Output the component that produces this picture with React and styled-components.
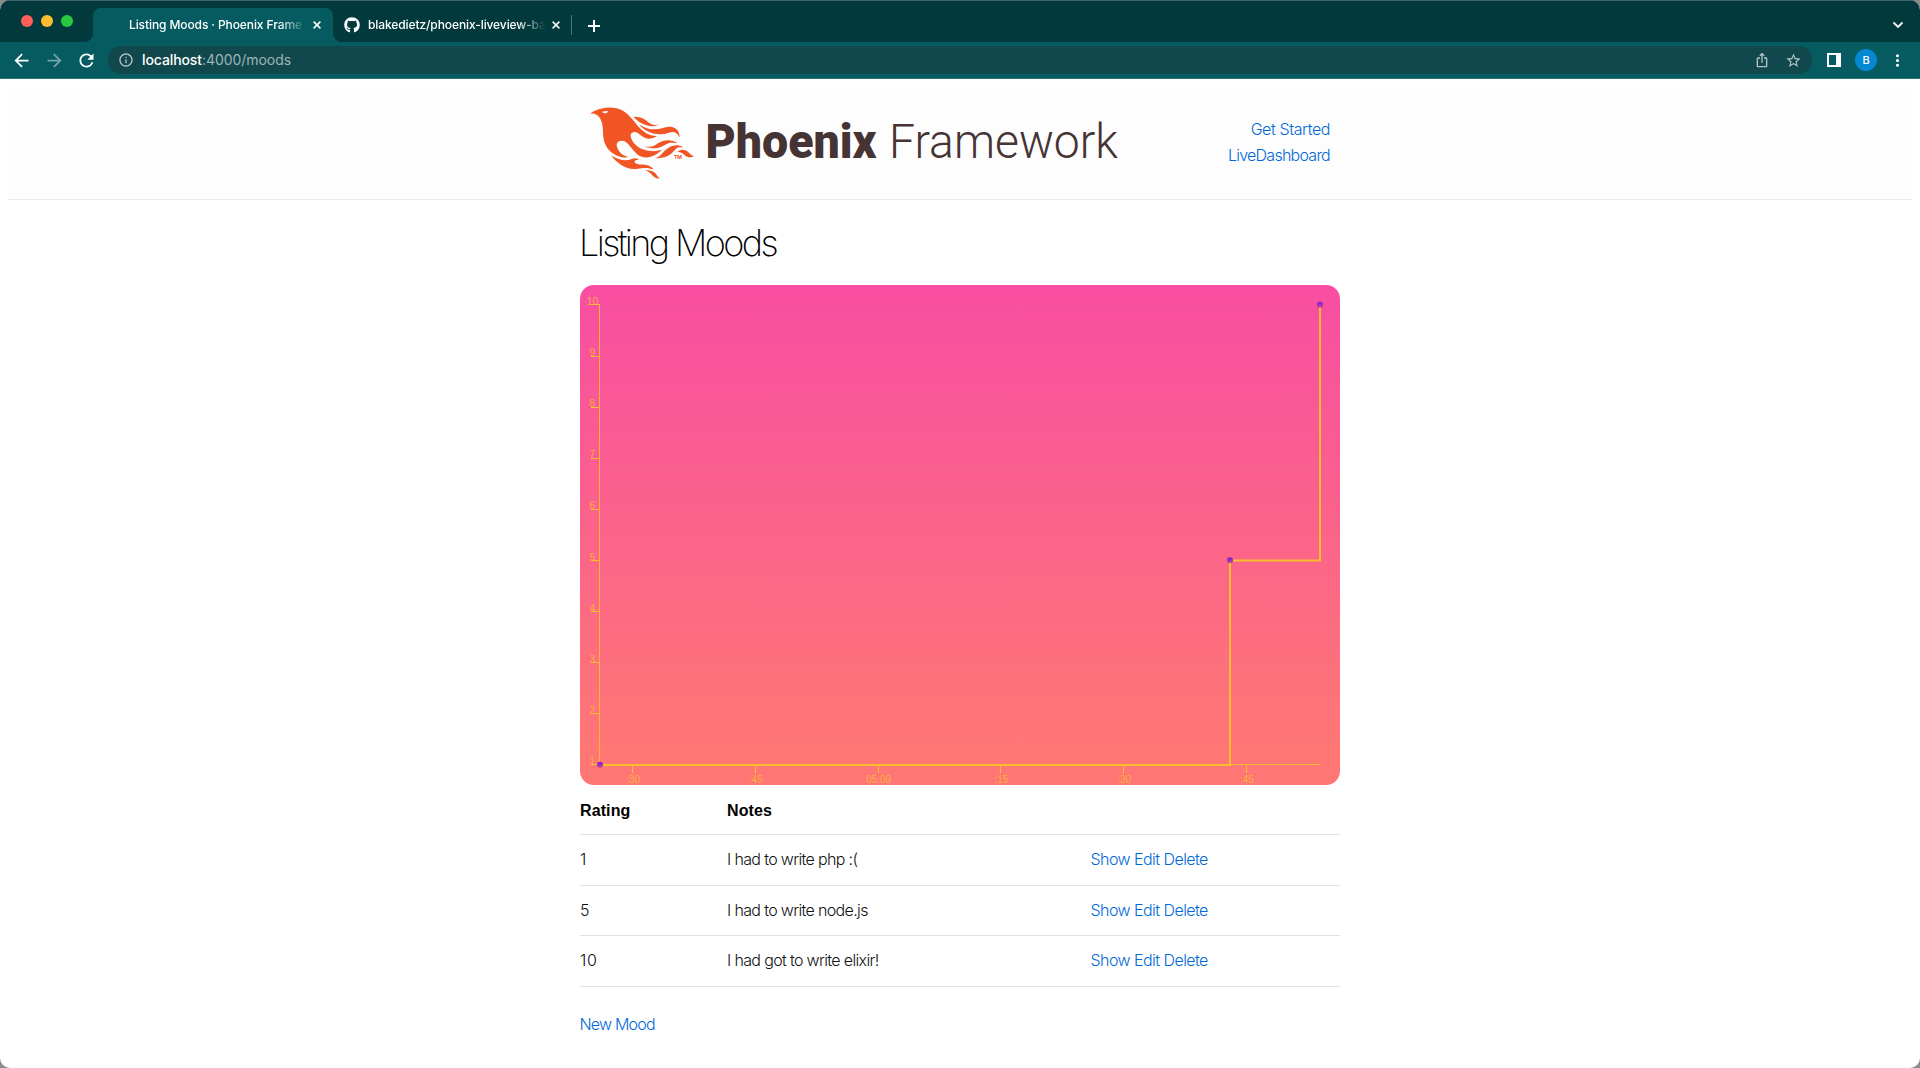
import React from "react";
import styled, { createGlobalStyle } from "styled-components";
import {
  MdArrowBack,
  MdArrowForward,
  MdRefresh,
  MdInfoOutline,
  MdIosShare,
  MdStarBorder,
  MdMoreVert,
} from "react-icons/md";
import { FaGithub } from "react-icons/fa";
import { SiPhoenixframework } from "react-icons/si";

const color = {
  strip: "#02393c",
  toolbar: "#055b60",
  field: "#10484d",
  link: "#0069d9",
  yellow: "#f9bf2c",
  phoenix: "#f15524",
  ink: "#463333",
};

const GlobalStyle = createGlobalStyle`
  *, *::before, *::after { box-sizing: border-box; }
  body {
    margin: 0;
    background: #8b8b8b;
    font-family: Inter, "Liberation Sans", sans-serif;
  }
  svg { display: block; flex: none; }
`;

const Window = styled.div`
  display: flex;
  flex-direction: column;
  height: 1068px;
  overflow: hidden;
  background: #fff;
  border-radius: 10px;
`;

const TabStrip = styled.div`
  display: flex;
  align-items: flex-end;
  height: 42px;
  background: ${color.strip};
  border-top: 1px solid #3c6568;
  color: #fff;
`;

const Lights = styled.div`
  display: flex;
  gap: 8px;
  width: 93px;
  height: 41px;
  padding: 14px 0 0 21px;
`;

const Light = styled.span`
  width: 12px;
  height: 12px;
  border-radius: 50%;
  background: ${(p) => p.$color};
`;

const Tab = styled.div`
  position: relative;
  display: flex;
  align-items: center;
  width: ${(p) => p.$width}px;
  height: 34px;
  padding-left: ${(p) => (p.$active ? 36 : 11)}px;
  border-radius: 8px 8px 0 0;
  background: ${(p) => (p.$active ? color.toolbar : "transparent")};

  &::before,
  &::after {
    content: "";
    display: ${(p) => (p.$active ? "block" : "none")};
    position: absolute;
    bottom: 0;
    width: 8px;
    height: 8px;
  }
  &::before {
    left: -8px;
    background: radial-gradient(circle at 0 0, transparent 7.5px, ${color.toolbar} 8px);
  }
  &::after {
    right: -8px;
    background: radial-gradient(circle at 100% 0, transparent 7.5px, ${color.toolbar} 8px);
  }
`;

const TabTitle = styled.span`
  width: 178px;
  margin-left: ${(p) => (p.$iconed ? 8 : 0)}px;
  white-space: nowrap;
  font-size: 12px;
  font-weight: 500;
  line-height: 16px;
  letter-spacing: -0.1px;
  mask-image: linear-gradient(to right, #000 84%, transparent 100%);
`;

const Stroke = styled.svg`
  margin-left: ${(p) => p.$gap || 0}px;
  fill: none;
  stroke: currentColor;
  stroke-width: ${(p) => p.$weight || 1.6};
`;

const StripDivider = styled.span`
  width: 1px;
  height: 20px;
  margin: 0 16px 7px 2px;
  background: #4f7477;
`;

const NewTab = styled.span`
  margin-bottom: 10px;
`;

const TabSearch = styled.span`
  margin: 0 16px 11px auto;
`;

const Toolbar = styled.div`
  display: flex;
  align-items: center;
  height: 37px;
  padding-left: 11px;
  background: ${color.toolbar};
  border-bottom: 1px solid #2b7478;
  color: #fff;
`;

const NavButtons = styled.div`
  display: flex;
  gap: 11.5px;
  width: 97px;
`;

const NavButton = styled.span`
  opacity: ${(p) => (p.$disabled ? 0.45 : 1)};
`;

const AddressField = styled.div`
  display: flex;
  flex: none;
  align-items: center;
  width: 1704px;
  height: 28px;
  padding: 0 10px;
  border-radius: 14px;
  background: ${color.field};
  color: #b4c4c5;
`;

const Url = styled.span`
  flex: 1;
  margin-left: 8px;
  font-size: 14px;
  line-height: 18px;
  letter-spacing: -0.05px;
  color: #9fb5b7;

  b {
    font-weight: 500;
    letter-spacing: -0.1px;
    color: #fff;
  }
`;

const FieldActions = styled.div`
  display: flex;
  align-items: center;
  gap: 15px;
`;

const SidePanel = styled.span`
  width: 14px;
  height: 14px;
  margin-left: 15px;
  border: 2px solid #fff;
  border-right-width: 5px;
`;

const Avatar = styled.span`
  width: 22px;
  height: 22px;
  margin: 0 11px 0 14px;
  border-radius: 50%;
  background: #0588d1;
  font-size: 11px;
  font-weight: 500;
  line-height: 22px;
  text-align: center;
`;

const Page = styled.div`
  flex: 1;
  padding: 8px;
`;

const Header = styled.header`
  height: 113px;
  background: #fdfdfd;
  border-bottom: 1px solid #eaeaea;
`;

const Container = styled.div`
  width: 760px;
  margin: 0 auto;
`;

const HeaderRow = styled(Container)`
  display: flex;
  justify-content: space-between;
  padding: 0 10px;
`;

const Brand = styled.div`
  display: flex;
  align-items: flex-start;
  height: 112px;
`;

const Bird = styled.div`
  position: relative;
  margin-top: 4px;
  color: ${color.phoenix};
`;

const Trademark = styled.span`
  position: absolute;
  left: 84px;
  top: 63px;
  font: 700 5px/6px Inter, sans-serif;
`;

const Wordmark = styled.svg`
  margin: 14px 0 0 8px;
  overflow: visible;
  font-family: Roboto, sans-serif;
  font-size: 49px;
  fill: ${color.ink};
`;

const Link = styled.a`
  color: ${color.link};
  font-size: 16px;
  font-weight: 300;
  letter-spacing: ${(p) => p.$spacing ?? -0.56}px;
`;

const HeaderLinks = styled.nav`
  display: flex;
  flex-direction: column;
  align-items: flex-end;
  padding-top: 29px;
  line-height: 26px;
`;

const Title = styled.h1`
  margin: 23px 0 0 -1px;
  font-size: 36px;
  font-weight: 200;
  line-height: 40px;
  letter-spacing: -2.6px;
  color: #000;
`;

const Chart = styled.div`
  height: 500px;
  margin-top: 22px;
  border-radius: 14px;
  overflow: hidden;
  background: linear-gradient(#f84ea2, #ff7675 92%, #ff7675);
`;

const Plot = styled.svg`
  font-family: "Liberation Sans", sans-serif;
  font-size: 10px;
`;

const Table = styled.div`
  display: grid;
  grid-template-columns: 147px 363.5px 1fr;
`;

const Row = styled.div`
  display: grid;
  grid-template-columns: subgrid;
  grid-column: 1 / -1;
  align-items: center;
  height: ${(p) => p.$height}px;
  padding-${(p) => (p.$head ? "top" : "bottom")}: 2px;
  border-bottom: 1px solid #e1e1e1;
`;

const HeadCell = styled.span`
  font: 700 16px/24px "Liberation Sans", Arial, sans-serif;
  letter-spacing: 0.1px;
  color: #000;
`;

const Cell = styled.span`
  font-size: 16px;
  font-weight: 300;
  line-height: 24px;
  letter-spacing: ${(p) => (p.$numeric ? 0.6 : -0.65)}px;
  color: #111;
`;

const Actions = styled.span`
  display: flex;
  gap: 4px;
  line-height: 24px;
`;

const Footer = styled.div`
  margin: 25px 0 0 -0.5px;
  line-height: 24px;
`;

const moods = [
  { rating: 1, notes: "I had to write php :(" },
  { rating: 5, notes: "I had to write node.js" },
  { rating: 10, notes: "I had got to write elixir!" },
];

const yTicks = [10, 9, 8, 7, 6, 5, 4, 3, 2, 1];
const xTicks = [":30", ":45", "05:09", ":15", ":30", ":45"];
const points = [
  [20, 480],
  [650, 275.5],
  [740, 20],
];

function CloseIcon() {
  return (
    <Stroke width="8" height="8" viewBox="0 0 8 8" $gap={6} $weight={1.5}>
      <path d="M0.6 0.6l6.8 6.8M7.4 0.6L0.6 7.4" />
    </Stroke>
  );
}

function MoodChart() {
  return (
    <Chart>
      <Plot width="760" height="500" viewBox="0 0 760 500">
        <defs>
          <linearGradient id="dot" x1="0" y1="0" x2="0" y2="1">
            <stop offset="0" stopColor="#7614e8" />
            <stop offset="1" stopColor="#c4488f" />
          </linearGradient>
        </defs>
        <g stroke={color.yellow} fill="none">
          <path d="M19.5 19v461M19 479.5H740" strokeOpacity="0.9" />
          {yTicks.map((v, i) => (
            <path key={v} d={`M11 ${Math.ceil(19 + i * 51.11) + 0.5}h8`} />
          ))}
          {xTicks.map((t, i) => (
            <path key={i} d={`M${Math.floor(52.5 + i * 122.78) + 0.5} 480v8`} />
          ))}
          <path d="M20 480H650V275.5H740V20" strokeWidth="2" />
        </g>
        <g fill={color.yellow} fillOpacity="0.85" textAnchor="middle">
          {yTicks.map((v, i) => (
            <text key={v} x="12.4" y={20 + i * 51.11}>{v}</text>
          ))}
          {xTicks.map((t, i) => (
            <text key={i} x={53 + i * 122.78} y="498">{t}</text>
          ))}
        </g>
        {points.map(([x, y]) => (
          <circle key={x} cx={x} cy={y - 0.3} r="3" fill="url(#dot)" />
        ))}
      </Plot>
    </Chart>
  );
}

export default function App() {
  return (
    <Window>
      <GlobalStyle />
      <TabStrip>
        <Lights>
          <Light $color="#ff5f57" />
          <Light $color="#febc2e" />
          <Light $color="#28c840" />
        </Lights>
        <Tab $active $width={240}>
          <TabTitle>Listing Moods · Phoenix Frame</TabTitle>
          <CloseIcon />
        </Tab>
        <Tab $width={236}>
          <FaGithub size={16} />
          <TabTitle $iconed>blakedietz/phoenix-liveview-ba</TabTitle>
          <CloseIcon />
        </Tab>
        <StripDivider />
        <NewTab>
          <Stroke width="12" height="12" viewBox="0 0 12 12" $weight={2}>
            <path d="M6 0v12M0 6h12" />
          </Stroke>
        </NewTab>
        <TabSearch>
          <Stroke width="12" height="12" viewBox="0 0 12 12" $weight={1.8}>
            <path d="M1.5 3.5L6 8l4.5-4.5" />
          </Stroke>
        </TabSearch>
      </TabStrip>
      <Toolbar>
        <NavButtons>
          <NavButton><MdArrowBack size={21} /></NavButton>
          <NavButton $disabled><MdArrowForward size={21} /></NavButton>
          <NavButton><MdRefresh size={21} /></NavButton>
        </NavButtons>
        <AddressField>
          <MdInfoOutline size={16} />
          <Url><b>localhost</b>:4000/moods</Url>
          <FieldActions>
            <MdIosShare size={16} />
            <MdStarBorder size={17} />
          </FieldActions>
        </AddressField>
        <SidePanel />
        <Avatar>B</Avatar>
        <MdMoreVert size={19} />
      </Toolbar>
      <Page>
        <Header>
          <HeaderRow>
            <Brand>
              <Bird>
                <SiPhoenixframework size={104} />
                <Trademark>TM</Trademark>
              </Bird>
              <Wordmark width="420" height="76" viewBox="0 0 420 76">
                <text x="3.5" y="56.5" fontWeight="900" textLength="171" lengthAdjust="spacingAndGlyphs">Phoenix</text>
                <text x="187" y="56.5" fontWeight="300" textLength="229" lengthAdjust="spacingAndGlyphs">Framework</text>
              </Wordmark>
            </Brand>
            <HeaderLinks>
              <Link $spacing={-0.4}>Get Started</Link>
              <Link $spacing={-0.75}>LiveDashboard</Link>
            </HeaderLinks>
          </HeaderRow>
        </Header>
        <Container>
          <Title>Listing Moods</Title>
          <MoodChart />
          <Table>
            <Row $head $height={50}>
              <HeadCell>Rating</HeadCell>
              <HeadCell>Notes</HeadCell>
            </Row>
            {moods.map((m, i) => (
              <Row key={m.rating} $height={i === 1 ? 50 : 51}>
                <Cell $numeric>{m.rating}</Cell>
                <Cell>{m.notes}</Cell>
                <Actions>
                  <Link>Show</Link>
                  <Link>Edit</Link>
                  <Link>Delete</Link>
                </Actions>
              </Row>
            ))}
          </Table>
          <Footer>
            <Link $spacing={-0.8}>New Mood</Link>
          </Footer>
        </Container>
      </Page>
    </Window>
  );
}
